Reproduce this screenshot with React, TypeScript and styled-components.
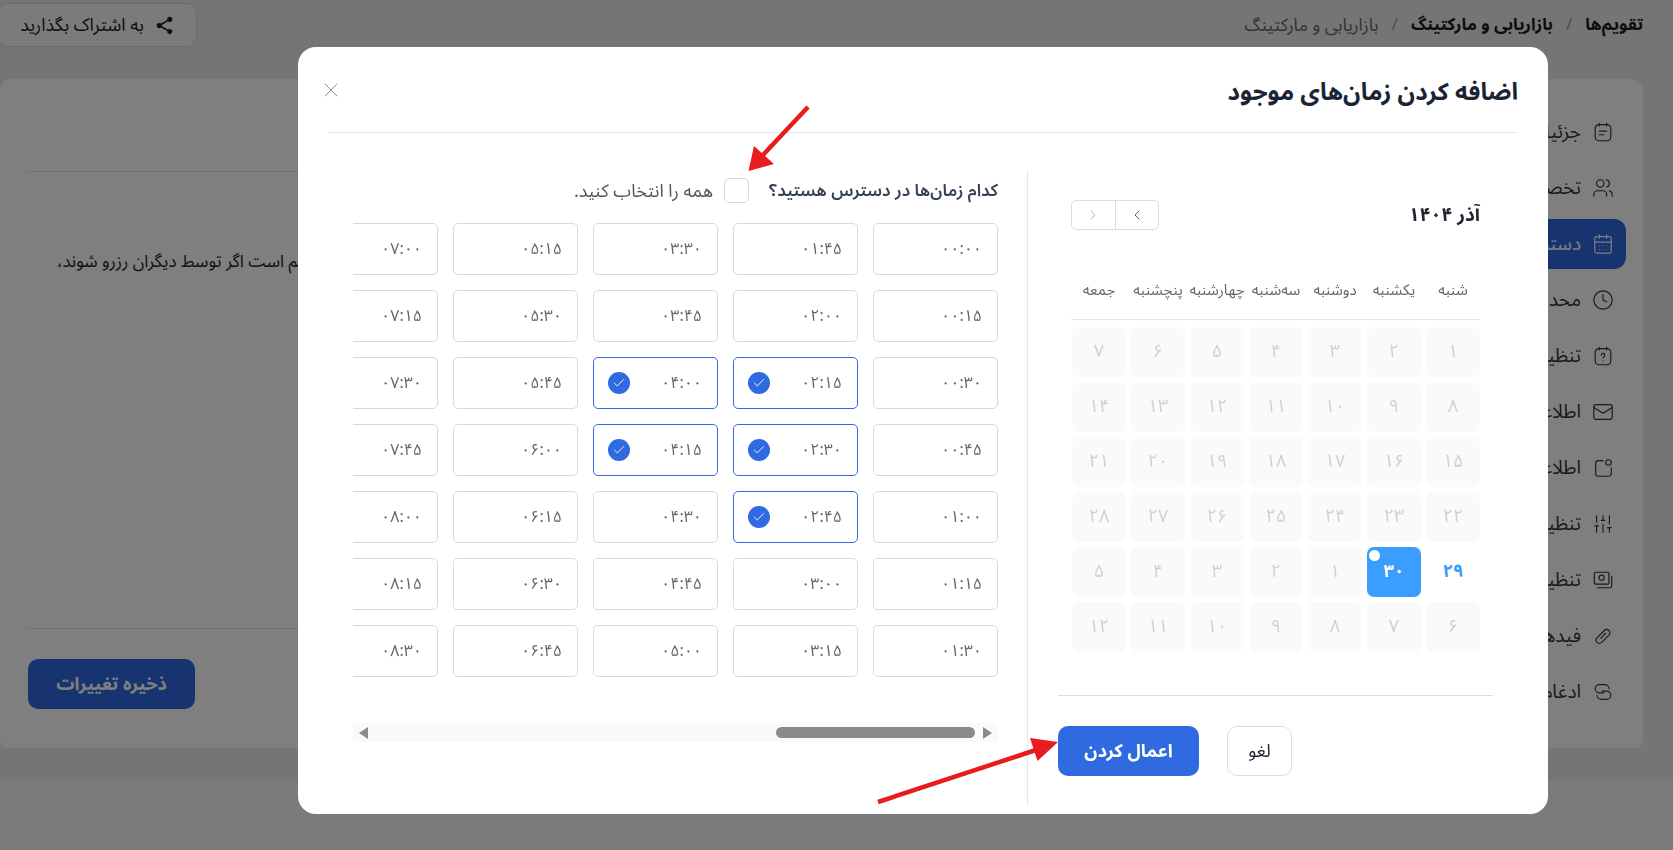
import { FC, ReactNode } from "react"
import styled, { createGlobalStyle } from "styled-components"
import { MdShare } from "react-icons/md"
import { X, ChevronLeft, ChevronRight, Check, Users, CalendarDays, Clock, Mail, SlidersVertical } from "lucide-react"

const FONT = `"Noto Sans Arabic", "Vazirmatn", "Noto Sans", "DejaVu Sans", sans-serif`

const GlobalStyle = createGlobalStyle`
  html, body {
    margin: 0;
    padding: 0;
    height: 100%;
    background: #f5f8f8;
    font-family: ${FONT};
    overflow: hidden;
  }
  * { box-sizing: border-box; }
`

// #region page behind the dialog
const Page = styled.div`
  width: 1673px;
  height: 850px;
  overflow: hidden;
  direction: rtl;
  display: flex;
  flex-direction: column;
`
const PageTop = styled.div`
  height: 780px;
  padding-right: 30px;
  background: #ebebeb;
  display: flex;
  flex-direction: column;
`
const TopBar = styled.header`
  height: 79px;
  display: flex;
  justify-content: space-between;
  padding-top: 3px;
`
const Breadcrumb = styled.nav`
  display: flex;
  gap: 13px;
  height: 44px;
  align-items: center;
  font-size: 17px;
`
const Crumb = styled.span<{ $muted?: boolean }>`
  font-size: ${p => (p.$muted ? "17.5px" : "17px")};
  font-weight: ${p => (p.$muted ? 400 : 700)};
  color: ${p => (p.$muted ? "#666" : "#1b1b1b")};
`
const CrumbSlash = styled.span`
  color: #999;
`
const ShareButton = styled.button`
  width: 199px;
  height: 44px;
  margin-left: -2px;
  border: 1px solid #d6d6d6;
  border-radius: 10px;
  background: #f7f7f7;
  display: flex;
  align-items: center;
  justify-content: center;
  gap: 10px;
  font: 400 18px ${FONT};
  color: #1b1b1b;
  svg { font-size: 21px; }
`
const Card = styled.section`
  height: 669px;
  background: #fff;
  border-radius: 12px 12px 8px 8px;
  display: flex;
  padding-right: 17px;
`
const Sidebar = styled.aside`
  width: 300px;
  flex: none;
  padding-top: 28px;
  display: flex;
  flex-direction: column;
  gap: 6px;
`
const SideItem = styled.div<{ $active?: boolean }>`
  height: 50px;
  display: flex;
  align-items: center;
  gap: 11px;
  padding-right: 12px;
  border-radius: 12px;
  font-size: 19px;
  color: ${p => (p.$active ? "#fff" : "#333")};
  background: ${p => (p.$active ? "#3068e0" : "transparent")};
  svg { flex: none; }
`
const Main = styled.div`
  flex: 1;
  padding-left: 28px;
  padding-top: 92px;
  display: flex;
  flex-direction: column;
`
const MainRule = styled.div`
  height: 1px;
  background: #e4e4e4;
`
const Note = styled.p`
  margin: 78px 0 0;
  padding-left: 29px;
  height: 378px;
  font-size: 17px;
  line-height: 24px;
  color: #222;
  white-space: nowrap;
  text-align: left;
`
const SaveRow = styled.div`
  padding-top: 30px;
  display: flex;
  justify-content: flex-end;
`
const SaveButton = styled.button`
  width: 167px;
  height: 50px;
  border: 0;
  border-radius: 10px;
  background: #3068e0;
  color: #fff;
  font: 700 18px ${FONT};
`
// #endregion

// #region dialog
const Overlay = styled.div`
  position: fixed;
  inset: 0;
  background: rgba(0, 0, 0, 0.5);
  padding: 47px 125px 0 0;
  direction: rtl;
  display: flex;
  align-items: flex-start;
`
const Modal = styled.div`
  width: 1250px;
  height: 767px;
  background: #fff;
  border-radius: 18px;
  display: flex;
  flex-direction: column;
`
const ModalHeader = styled.div`
  height: 86px;
  margin: 0 30px;
  border-bottom: 1px solid #e8e9ee;
  display: flex;
  align-items: center;
  justify-content: space-between;
`
const ModalTitle = styled.h2`
  margin: 5px 0 0;
  font-size: 24px;
  font-weight: 700;
  color: #1a2433;
`
const CloseButton = styled.button`
  border: 0;
  padding: 0;
  margin-left: -9px;
  background: none;
  color: #8b8e96;
  display: flex;
`
const ModalBody = styled.div`
  margin-top: 37px;
  height: 636px;
  display: flex;
`
const CalendarPane = styled.div`
  width: 521px;
  flex: none;
  padding: 30px 55px 0 30px;
  border-left: 1px solid #e6e7ec;
  display: flex;
  flex-direction: column;
`
const CalendarInner = styled.div`
  padding: 0 13px;
`
const CalendarHead = styled.div`
  height: 30px;
  display: flex;
  align-items: center;
  justify-content: space-between;
`
const MonthName = styled.div`
  font-size: 19px;
  font-weight: 700;
  color: #1f2530;
`
const MonthNav = styled.div`
  width: 88px;
  height: 30px;
  border: 1px solid #d9dbe3;
  border-radius: 5px;
  display: flex;
`
const NavButton = styled.div<{ $dim?: boolean }>`
  flex: 1;
  display: flex;
  align-items: center;
  justify-content: center;
  color: ${p => (p.$dim ? "#a4a6ad" : "#3b3d44")};
  & + & { border-right: 1px solid #d9dbe3; }
`
const WeekRow = styled.div`
  margin-top: 30px;
  height: 60px;
  border-bottom: 1px solid #e6e7ec;
  display: grid;
  grid-template-columns: repeat(7, 54px);
  column-gap: 5px;
  align-items: center;
`
const WeekDay = styled.div`
  font-size: 15px;
  color: #666;
  white-space: nowrap;
  display: flex;
  justify-content: center;
`
const DayGrid = styled.div`
  margin-top: 7px;
  display: grid;
  grid-template-columns: repeat(7, 54px);
  grid-auto-rows: 50px;
  gap: 5px;
`
const DayCell = styled.div<{ $kind?: "off" | "open" | "today" }>`
  position: relative;
  display: flex;
  align-items: center;
  justify-content: center;
  padding-bottom: 3px;
  border-radius: 7px;
  font-size: 18px;
  font-weight: ${p => (p.$kind && p.$kind !== "off" ? 700 : 400)};
  color: ${p => (p.$kind === "today" ? "#fff" : p.$kind === "open" ? "#3b9eff" : "#cfd0d6")};
  background: ${p => (p.$kind === "today" ? "#3b9eff" : p.$kind === "open" ? "#fff" : "#fafafa")};
`
const TodayDot = styled.span`
  position: absolute;
  top: 3px;
  left: 2px;
  width: 11px;
  height: 11px;
  border-radius: 50%;
  background: #fff;
`
const CalendarFooter = styled.div`
  margin-top: 43px;
  padding-top: 30px;
  border-top: 1px solid #dcdde6;
  display: flex;
  gap: 28px;
  justify-content: flex-start;
  flex-direction: row-reverse;
`
const ApplyButton = styled.button`
  width: 141px;
  height: 50px;
  border: 0;
  border-radius: 10px;
  background: #306ae0;
  color: #fff;
  font: 700 18px ${FONT};
`
const CancelButton = styled.button`
  width: 65px;
  height: 50px;
  border: 1px solid #dcdde6;
  border-radius: 10px;
  background: #fff;
  color: #1f2530;
  font: 400 18px ${FONT};
`
const SlotsPane = styled.div`
  flex: 1;
  min-width: 0;
  padding: 8px 29px 0 55px;
  display: flex;
  flex-direction: column;
`
const SlotsHead = styled.div`
  height: 25px;
  display: flex;
  align-items: center;
`
const SlotsQuestion = styled.label`
  font-size: 17px;
  font-weight: 600;
  color: #344054;
`
const SelectAll = styled.span`
  width: 25px;
  height: 25px;
  margin: 0 20px 0 11px;
  border: 1px solid #d5d8e0;
  border-radius: 5px;
  background: #fff;
`
const SelectAllLabel = styled.span`
  font-size: 18px;
  color: #555;
`
const SlotsViewport = styled.div`
  margin-top: 20px;
  overflow: hidden;
`
const SlotsGrid = styled.div`
  display: grid;
  grid-auto-flow: column;
  grid-template-rows: repeat(7, 52px);
  grid-auto-columns: 125px;
  column-gap: 15px;
  row-gap: 15px;
  width: max-content;
`
const Slot = styled.div<{ $on?: boolean }>`
  border: 1px solid ${p => (p.$on ? "#306ae0" : "#d6d9e1")};
  border-radius: 5px;
  padding: 0 15px 0 14px;
  display: flex;
  align-items: center;
  justify-content: space-between;
  font-size: 16px;
  color: #666;
`
const SlotCheck = styled.span`
  width: 22px;
  height: 22px;
  border-radius: 50%;
  background: #306ae0;
  color: #fff;
  display: flex;
  align-items: center;
  justify-content: center;
`
const ScrollTrack = styled.div`
  margin-top: 46px;
  height: 19px;
  background: #fafafa;
  display: flex;
  align-items: center;
  padding: 0 6px;
`
const ScrollArrow = styled.span<{ $dir: "left" | "right" }>`
  width: 0;
  height: 0;
  border-top: 6px solid transparent;
  border-bottom: 6px solid transparent;
  ${p => (p.$dir === "left" ? "border-right: 9px solid #8a8a8a;" : "border-left: 9px solid #8a8a8a;")}
`
const ScrollThumb = styled.span`
  width: 199px;
  height: 11px;
  margin-right: 8px;
  border-radius: 6px;
  background: #8a8a8a;
`
const ScrollRest = styled.span`
  flex: 1;
`
const Annotation = styled.svg`
  position: fixed;
  inset: 0;
  width: 1673px;
  height: 850px;
  pointer-events: none;
`
// #endregion

const fa = (n: number | string) => String(n).replace(/\d/g, d => "۰۱۲۳۴۵۶۷۸۹"[+d])

const Ico: FC<{ children: ReactNode }> = ({ children }) => (
  <svg width="22" height="22" viewBox="0 0 24 24" fill="none" stroke="currentColor" strokeWidth="1.25" strokeLinecap="round" strokeLinejoin="round">
    {children}
  </svg>
)

const NoteIcon = () => (
  <Ico>
    <rect x="3.5" y="4" width="17" height="17.5" rx="4" />
    <path d="M8 2.5v3M16 2.5v3M8 11h8M8 15h5" />
  </Ico>
)
const QuestionIcon = () => (
  <Ico>
    <rect x="3.5" y="4" width="17" height="17.5" rx="4" />
    <path d="M8 2.5v3M16 2.5v3M10.2 11a1.9 1.9 0 1 1 2.7 1.8c-.6.3-.9.7-.9 1.4M12 17.2v.1" />
  </Ico>
)
const SquareDotIcon = () => (
  <Ico>
    <path d="M12 4H7a3 3 0 0 0-3 3v11a3 3 0 0 0 3 3h11a3 3 0 0 0 3-3v-6" />
    <circle cx="18" cy="6" r="3" />
  </Ico>
)
const PhotosIcon = () => (
  <Ico>
    <rect x="2.5" y="3.5" width="16" height="13" rx="1.5" />
    <circle cx="10.5" cy="9.5" r="2.8" />
    <path d="M21.5 8v10.5a2 2 0 0 1-2 2H6" />
  </Ico>
)
const ClipIcon = () => (
  <Ico>
    <path d="M9.5 14.5l5.5-5.5" />
    <path d="M7 12.5l6.5-6.5a3.5 3.5 0 0 1 5 5l-8 8a3.5 3.5 0 0 1-5-5l6.5-6.5" />
  </Ico>
)
const MergeIcon = () => (
  <Ico>
    <path d="M13 13H8a4.5 4.5 0 0 1 0-9h6a4.5 4.5 0 0 1 4.5 4.5" />
    <path d="M11 11h5a4.5 4.5 0 0 1 0 9h-6a4.5 4.5 0 0 1-4.5-4.5" />
  </Ico>
)

const sideItems: { label: string; icon: ReactNode; active?: boolean }[] = [
  { label: "جزئیات", icon: <NoteIcon /> },
  { label: "تخصیص", icon: <Users size={22} strokeWidth={1.25} /> },
  { label: "دسترسی", icon: <CalendarDays size={22} strokeWidth={1.25} />, active: true },
  { label: "محدودیت", icon: <Clock size={22} strokeWidth={1.25} /> },
  { label: "تنظیمات", icon: <QuestionIcon /> },
  { label: "اطلاعات", icon: <Mail size={22} strokeWidth={1.25} /> },
  { label: "اطلاعات", icon: <SquareDotIcon /> },
  { label: "تنظیمات", icon: <SlidersVertical size={22} strokeWidth={1.25} /> },
  { label: "تنظیمات", icon: <PhotosIcon /> },
  { label: "فیدها", icon: <ClipIcon /> },
  { label: "ادغام", icon: <MergeIcon /> },
]

const weekDays = ["شنبه", "یکشنبه", "دوشنبه", "سه‌شنبه", "چهارشنبه", "پنچشنبه", "جمعه"]

const days = [
  ...Array.from({ length: 28 }, (_, i) => i + 1),
  29, 30, 1, 2, 3, 4, 5,
  6, 7, 8, 9, 10, 11, 12,
]

const selected = new Set([9, 10, 11, 16, 17])
const slots = Array.from({ length: 42 }, (_, i) => {
  const m = i * 15
  const hh = String(Math.floor(m / 60)).padStart(2, "0")
  const mm = String(m % 60).padStart(2, "0")
  return fa(`${hh}:${mm}`)
})

const App: FC = () => (
  <>
    <GlobalStyle />
    <Page>
      <PageTop>
        <TopBar>
          <Breadcrumb>
            <Crumb>تقویم‌ها</Crumb>
            <CrumbSlash>/</CrumbSlash>
            <Crumb>بازاریابی و مارکتینگ</Crumb>
            <CrumbSlash>/</CrumbSlash>
            <Crumb $muted>بازاریابی و مارکتینگ</Crumb>
          </Breadcrumb>
          <ShareButton>
            <MdShare />
            به اشتراک بگذارید
          </ShareButton>
        </TopBar>
        <Card>
          <Sidebar>
            {sideItems.map((item, i) => (
              <SideItem key={i} $active={item.active}>
                {item.icon}
                {item.label}
              </SideItem>
            ))}
          </Sidebar>
          <Main>
            <MainRule />
            <Note>این مهم است اگر توسط دیگران رزرو شوند،</Note>
            <MainRule />
            <SaveRow>
              <SaveButton>ذخیره تغییرات</SaveButton>
            </SaveRow>
          </Main>
        </Card>
      </PageTop>
    </Page>

    <Overlay>
      <Modal>
        <ModalHeader>
          <ModalTitle>اضافه کردن زمان‌های موجود</ModalTitle>
          <CloseButton aria-label="بستن">
            <X size={24} strokeWidth={1} />
          </CloseButton>
        </ModalHeader>
        <ModalBody>
          <CalendarPane>
            <CalendarInner>
              <CalendarHead>
                <MonthName>آذر ۱۴۰۴</MonthName>
                <MonthNav>
                  <NavButton><ChevronLeft size={16} strokeWidth={1.25} /></NavButton>
                  <NavButton $dim><ChevronRight size={16} strokeWidth={1.25} /></NavButton>
                </MonthNav>
              </CalendarHead>
              <WeekRow>
                {weekDays.map(d => <WeekDay key={d}>{d}</WeekDay>)}
              </WeekRow>
              <DayGrid>
                {days.map((d, i) => (
                  <DayCell key={i} $kind={i === 28 ? "open" : i === 29 ? "today" : "off"}>
                    {i === 29 && <TodayDot />}
                    {fa(d)}
                  </DayCell>
                ))}
              </DayGrid>
            </CalendarInner>
            <CalendarFooter>
              <ApplyButton>اعمال کردن</ApplyButton>
              <CancelButton>لغو</CancelButton>
            </CalendarFooter>
          </CalendarPane>
          <SlotsPane>
            <SlotsHead>
              <SlotsQuestion>کدام زمان‌ها در دسترس هستید؟</SlotsQuestion>
              <SelectAll />
              <SelectAllLabel>همه را انتخاب کنید.</SelectAllLabel>
            </SlotsHead>
            <SlotsViewport>
              <SlotsGrid>
                {slots.map((s, i) => (
                  <Slot key={s} $on={selected.has(i)}>
                    <span>{s}</span>
                    {selected.has(i) && <SlotCheck><Check size={14} strokeWidth={1.5} /></SlotCheck>}
                  </Slot>
                ))}
              </SlotsGrid>
            </SlotsViewport>
            <ScrollTrack>
              <ScrollArrow $dir="right" />
              <ScrollThumb />
              <ScrollRest />
              <ScrollArrow $dir="left" />
            </ScrollTrack>
          </SlotsPane>
        </ModalBody>
      </Modal>
    </Overlay>

    <Annotation viewBox="0 0 1673 850">
      <line x1="808" y1="107" x2="762" y2="156" stroke="#e81c1c" strokeWidth="4.5" />
      <polygon points="748.5,171 754,146 774,164" fill="#e81c1c" />
      <line x1="878" y1="802" x2="1036" y2="750" stroke="#e81c1c" strokeWidth="4.5" />
      <polygon points="1058,742 1030,738 1037.5,761" fill="#e81c1c" />
    </Annotation>
  </>
)

export default App
